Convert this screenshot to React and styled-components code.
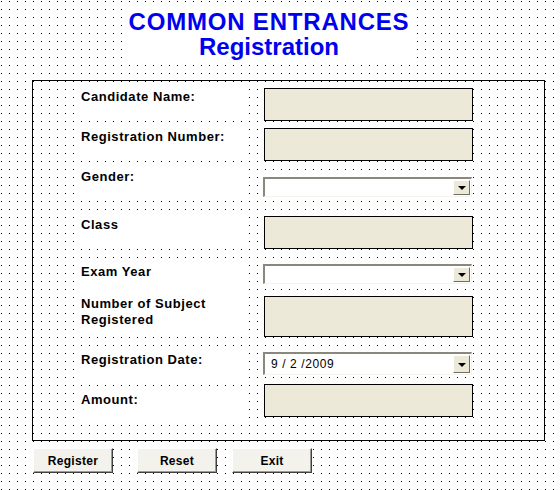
import React from "react";
import styled, { createGlobalStyle } from "styled-components";

const Global = createGlobalStyle`
  html, body { margin: 0; padding: 0; background: #fff; }
  body { font-family: "Liberation Sans", Arial, sans-serif; }
`;

const Page = styled.div`
  width: 560px;
  height: 490px;
  box-sizing: border-box;
  padding-top: 2px;
  overflow: hidden;
  background-color: #000;
  background-image:
    linear-gradient(to right, transparent 1px, #fff 1px),
    linear-gradient(to bottom, transparent 1px, #fff 1px);
  background-size: 8px 8px;
  background-position: 1px 1px;
`;

const TitleBox = styled.div`
  margin-left: 122px;
  width: 294px;
  height: 62px;
  box-sizing: border-box;
  padding-top: 7px;
  background: #fff;
  text-align: center;
  color: #0000f0;
  font-family: "Liberation Sans", Arial, sans-serif;
  font-weight: bold;
  font-size: 24px;
  line-height: 25px;
`;

const TitleLine = styled.div`
  letter-spacing: ${(p) => p.$ls || 0}px;
  white-space: nowrap;
`;

const Frame = styled.div`
  margin-top: 16px;
  margin-left: 32px;
  width: 513px;
  height: 361px;
  box-sizing: border-box;
  border: 1px solid #000;
  padding-left: 43px;
  display: flex;
  flex-direction: column;
`;

const Row = styled.div`
  display: grid;
  grid-template-columns: 170px 209px;
  column-gap: 18px;
  align-items: start;
  height: ${(p) => p.$h}px;
  flex: none;
`;

const Label = styled.div`
  margin-top: ${(p) => p.$mt}px;
  height: ${(p) => p.$h || 32}px;
  box-sizing: border-box;
  padding: 3px 0 0 5px;
  background: #fff;
  color: #000;
  font-size: 13px;
  font-weight: bold;
  line-height: 16px;
  letter-spacing: 0.55px;
`;

const TextBox = styled.div`
  margin-top: ${(p) => p.$mt}px;
  width: 209px;
  height: ${(p) => p.$h}px;
  box-sizing: border-box;
  border: 1px solid #000;
  background: #ece9d8;
`;

const Combo = styled.div`
  margin-top: ${(p) => p.$mt}px;
  margin-left: -1px;
  width: 209px;
  height: ${(p) => p.$h}px;
  box-sizing: border-box;
  border-style: solid;
  border-width: 2px 1px 1px 2px;
  border-color: #8a887d #f4f3ee #f4f3ee #8a887d;
  background: #fff;
  display: flex;
  align-items: stretch;
`;

const ComboText = styled.div`
  flex: 1;
  padding-left: 6px;
  font-size: 12px;
  letter-spacing: 0.6px;
  color: #000;
  display: flex;
  align-items: center;
`;

const DropButton = styled.div`
  width: 17px;
  margin: 1px;
  box-sizing: border-box;
  border-style: solid;
  border-width: 1px;
  border-color: #fff #716f64 #716f64 #fff;
  background: #ece9d8;
  display: flex;
  align-items: center;
  justify-content: center;
`;

const Arrow = styled.div`
  width: 0;
  height: 0;
  border-left: 4px solid transparent;
  border-right: 4px solid transparent;
  border-top: 4px solid #000;
  margin-top: 1px;
`;

const ButtonBar = styled.div`
  margin-top: 7px;
  display: flex;
`;

const Button = styled.div`
  margin-left: ${(p) => p.$ml}px;
  width: 80px;
  height: 25px;
  box-sizing: border-box;
  border-style: solid;
  border-width: 1px;
  border-color: #fff #404040 #404040 #fff;
  box-shadow: inset -1px -1px 0 #9d9b90;
  background: #f3f2ed;
  font-size: 12px;
  font-weight: bold;
  letter-spacing: 0.3px;
  color: #000;
  display: flex;
  align-items: center;
  justify-content: center;
`;

const DropDown = ({ mt, h, value }) => (
  <Combo $mt={mt} $h={h}>
    <ComboText>{value}</ComboText>
    <DropButton>
      <Arrow />
    </DropButton>
  </Combo>
);

const rows = [
  { label: "Candidate Name:", h: 43, lmt: 5, kind: "text", fmt: 7, fh: 33 },
  { label: "Registration Number:", h: 40, lmt: 2, kind: "text", fmt: 4, fh: 33 },
  { label: "Gender:", h: 46, lmt: 2, kind: "combo", fmt: 13, fh: 20 },
  { label: "Class", h: 48, lmt: 4, kind: "text", fmt: 6, fh: 33 },
  { label: "Exam Year", h: 32, lmt: 3, kind: "combo", fmt: 6, fh: 20 },
  { label: ["Number of Subject", "Registered"], h: 55, lmt: 3, lh: 40, kind: "text", fmt: 6, fh: 41 },
  { label: "Registration Date:", h: 37, lmt: 4, kind: "combo", fmt: 7, fh: 23, value: "9 / 2 /2009" },
  { label: "Amount:", h: 58, lmt: 7, kind: "text", fmt: 2, fh: 33 },
];

export default function App() {
  return (
    <>
      <Global />
      <Page>
        <TitleBox>
          <TitleLine $ls={0.8}>COMMON ENTRANCES</TitleLine>
          <TitleLine>Registration</TitleLine>
        </TitleBox>
        <Frame>
          {rows.map((r, i) => (
            <Row key={i} $h={r.h}>
              <Label $mt={r.lmt} $h={r.lh}>
                {Array.isArray(r.label)
                  ? r.label.map((t, j) => <div key={j}>{t}</div>)
                  : r.label}
              </Label>
              {r.kind === "text" ? (
                <TextBox $mt={r.fmt} $h={r.fh} />
              ) : (
                <DropDown mt={r.fmt} h={r.fh} value={r.value} />
              )}
            </Row>
          ))}
        </Frame>
        <ButtonBar>
          <Button $ml={33}>Register</Button>
          <Button $ml={24}>Reset</Button>
          <Button $ml={15}>Exit</Button>
        </ButtonBar>
      </Page>
    </>
  );
}
